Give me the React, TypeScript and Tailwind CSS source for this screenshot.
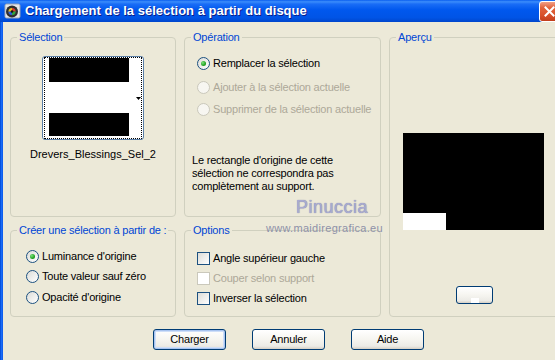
import React from "react";

function Group({
  label,
  className,
  children,
}: {
  label: string;
  className: string;
  children?: React.ReactNode;
}) {
  return (
    <fieldset className={`border border-[#D0D0BF] rounded-[4px] min-w-0 ${className}`}>
      <legend className="ml-[6px] px-[2px] text-[#0046D5] leading-[13px] whitespace-nowrap">{label}</legend>
      {children}
    </fieldset>
  );
}

function Radio({ checked, disabled }: { checked?: boolean; disabled?: boolean }) {
  return (
    <span
      className={`w-[13px] h-[13px] shrink-0 rounded-full border flex items-center justify-center ${
        disabled
          ? "border-[#CAC8BB] bg-[#F7F6F1]"
          : "border-[#1C5180] bg-[linear-gradient(135deg,#DCDCD7,#FFFFFF)]"
      }`}
    >
      {checked && (
        <span className="w-[5px] h-[5px] rounded-full bg-[radial-gradient(circle_at_35%_35%,#7BE37B,#21A121_60%,#1C8A1C)]" />
      )}
    </span>
  );
}

function Check({ disabled }: { disabled?: boolean }) {
  return (
    <span
      className={`w-[13px] h-[13px] shrink-0 border ${
        disabled
          ? "border-[#CAC8BB] bg-white"
          : "border-[#1C5180] bg-[linear-gradient(135deg,#DCDCD7,#FFFFFF)]"
      }`}
    />
  );
}

function Row({
  children,
  disabled,
  className,
}: {
  children: React.ReactNode;
  disabled?: boolean;
  className?: string;
}) {
  return (
    <div
      className={`flex items-center gap-[3px] h-[13px] leading-[13px] whitespace-nowrap ${
        disabled ? "text-[#ACA899]" : "text-black"
      } ${className ?? ""}`}
    >
      {children}
    </div>
  );
}

function XPButton({ label, isDefault }: { label: string; isDefault?: boolean }) {
  return (
    <div
      className={`w-[73px] h-[21px] rounded-[3px] border border-[#003C74] flex items-center justify-center text-black bg-[linear-gradient(180deg,#FFFFFF_0%,#F6F5F0_50%,#ECEBE6_85%,#D6D0C5_100%)] ${
        isDefault ? "shadow-[inset_0_0_0_1px_#A8C4F0,inset_0_0_0_2px_#CEDEF8]" : ""
      }`}
    >
      {label}
    </div>
  );
}

export default function App() {
  return (
    <div className="w-[555px] h-[360px] overflow-hidden bg-[#ECE9D8] font-['Liberation_Sans',Arial,sans-serif] text-[11px] tracking-[-0.2px] relative">
      <div className="w-[560px] h-[360px] flex flex-col">
        {/* Title bar */}
        <div className="h-[22px] shrink-0 flex items-center bg-[linear-gradient(180deg,#0A5EEF_0%,#3B8DFB_8%,#1A6DF6_18%,#0058EE_45%,#0054E6_80%,#0046CC_100%)]">
          <svg width="17" height="16" viewBox="0 0 17 16" className="ml-[4px] shrink-0">
            <rect x="1" y="1" width="15" height="14" rx="1.5" fill="#E8E8E8" stroke="#9AA4B4" />
            <circle cx="8" cy="8.5" r="6" fill="#2E2E2E" />
            <circle cx="8" cy="8.5" r="3.8" fill="#4A4A4A" />
            <path d="M8 5 A3.5 3.5 0 0 1 11.5 8.5 L8 8.5Z" fill="#E03A2A" />
            <path d="M11.5 8.5 A3.5 3.5 0 0 1 8 12 L8 8.5Z" fill="#2FA83A" />
            <path d="M8 12 A3.5 3.5 0 0 1 4.5 8.5 L8 8.5Z" fill="#2C5BD8" />
            <path d="M4.5 8.5 A3.5 3.5 0 0 1 8 5 L8 8.5Z" fill="#E8C21E" />
            <circle cx="8" cy="8.5" r="1.3" fill="#111" />
          </svg>
          <span className="ml-[4px] text-white font-bold text-[13px] tracking-[0px] leading-[22px] [text-shadow:1px_1px_0_#0A1E8A] whitespace-nowrap">
            Chargement de la sélection à partir du disque
          </span>
          <div className="flex-1" />
          <div className="w-[21px] h-[21px] shrink-0 rounded-[3px] border border-white flex items-center justify-center bg-[linear-gradient(180deg,#F0A088_0%,#E2643C_30%,#D8502A_70%,#C23E1C_100%)]">
            <svg width="11" height="11" viewBox="0 0 11 11">
              <path d="M1.5 1.5 L9.5 9.5 M9.5 1.5 L1.5 9.5" stroke="white" strokeWidth="2" strokeLinecap="square" />
            </svg>
          </div>
        </div>

        {/* Body */}
        <div className="flex flex-1">
          <div className="w-[3px] shrink-0 bg-[linear-gradient(90deg,#0045D0,#1A6CF6,#0A58EA)]" />
          <div className="pl-[7px] pt-[9px] flex flex-col">
            <div className="flex">
              {/* Left column */}
              <div className="w-[166px] flex flex-col gap-[7px]">
                <Group label="Sélection" className="h-[186px] w-[166px] flex flex-col items-center">
                  <div className="mt-[12px] w-[102px] h-[84px] border border-[#5A7EA6] rounded-[3px] px-[1px] bg-white flex">
                    <div className="flex-1 border border-dotted border-black flex pl-[4px]">
                      <div className="w-[80px] flex flex-col">
                        <div className="h-[24px] bg-black" />
                        <div className="h-[31px] bg-white" />
                        <div className="h-[23px] bg-black" />
                      </div>
                      <div className="flex-1 flex items-center justify-end">
                        <svg width="5" height="3" viewBox="0 0 5 3">
                          <polygon points="0,0 5,0 2.5,3" fill="black" />
                        </svg>
                      </div>
                    </div>
                  </div>
                  <div className="mt-[8px] leading-[13px] text-black tracking-[0px]">Drevers_Blessings_Sel_2</div>
                </Group>
                <Group label="Créer une sélection à partir de :" className="h-[93px] w-[166px]">
                  <div className="pl-[15px]">
                    <Row className="mt-[13px]">
                      <Radio checked />
                      <span>Luminance d'origine</span>
                    </Row>
                    <Row className="mt-[7px]">
                      <Radio />
                      <span>Toute valeur sauf zéro</span>
                    </Row>
                    <Row className="mt-[8px]">
                      <Radio />
                      <span>Opacité d'origine</span>
                    </Row>
                  </div>
                </Group>
              </div>

              {/* Middle column */}
              <div className="ml-[8px] w-[197px] flex flex-col gap-[7px]">
                <Group label="Opération" className="h-[186px] w-[197px]">
                  <div className="pl-[12px]">
                    <Row className="mt-[13px]">
                      <Radio checked />
                      <span>Remplacer la sélection</span>
                    </Row>
                    <Row className="mt-[11px]" disabled>
                      <Radio disabled />
                      <span>Ajouter à la sélection actuelle</span>
                    </Row>
                    <Row className="mt-[9px]" disabled>
                      <Radio disabled />
                      <span>Supprimer de la sélection actuelle</span>
                    </Row>
                  </div>
                  <p className="mt-[38px] pl-[7px] leading-[13px] text-black">
                    Le rectangle d'origine de cette
                    <br />
                    sélection ne correspondra pas
                    <br />
                    complètement au support.
                  </p>
                </Group>
                <Group label="Options" className="h-[93px] w-[197px]">
                  <div className="pl-[12px]">
                    <Row className="mt-[15px]">
                      <Check />
                      <span>Angle supérieur gauche</span>
                    </Row>
                    <Row className="mt-[7px]" disabled>
                      <Check disabled />
                      <span>Couper selon support</span>
                    </Row>
                    <Row className="mt-[7px]">
                      <Check />
                      <span>Inverser la sélection</span>
                    </Row>
                  </div>
                </Group>
              </div>

              {/* Right column */}
              <div className="ml-[8px]">
                <Group label="Aperçu" className="h-[286px] w-[170px]">
                  <div className="mt-[89px] ml-[13px] w-[141px] h-[97px] bg-black flex flex-col justify-end">
                    <div className="w-[43px] h-[17px] bg-white" />
                  </div>
                  <div className="mt-[56px] ml-[66px] w-[37px] h-[18px] rounded-[3px] border border-[#003C74] bg-[linear-gradient(180deg,#FFFFFF_0%,#F6F5F0_50%,#ECEBE6_85%,#D6D0C5_100%)] flex items-end justify-center">
                    <div className="w-[8px] h-[5px] bg-white" />
                  </div>
                </Group>
              </div>
            </div>

            {/* Buttons */}
            <div className="mt-[12px] ml-[143px] flex gap-[26px]">
              <XPButton label="Charger" isDefault />
              <XPButton label="Annuler" />
              <XPButton label="Aide" />
            </div>
          </div>
        </div>
      </div>

      {/* Watermark */}
      <div className="absolute left-[296px] top-[196px] text-[18px] leading-[22px] tracking-[0.5px] text-[#A9ABD0] [text-shadow:0_0_1px_#6C70A0] pointer-events-none">
        Pinuccia
      </div>
      <div className="absolute left-[266px] top-[222px] text-[11px] leading-[13px] tracking-[0.3px] text-[#8E91A8] pointer-events-none">
        www.maidiregrafica.eu
      </div>
    </div>
  );
}
